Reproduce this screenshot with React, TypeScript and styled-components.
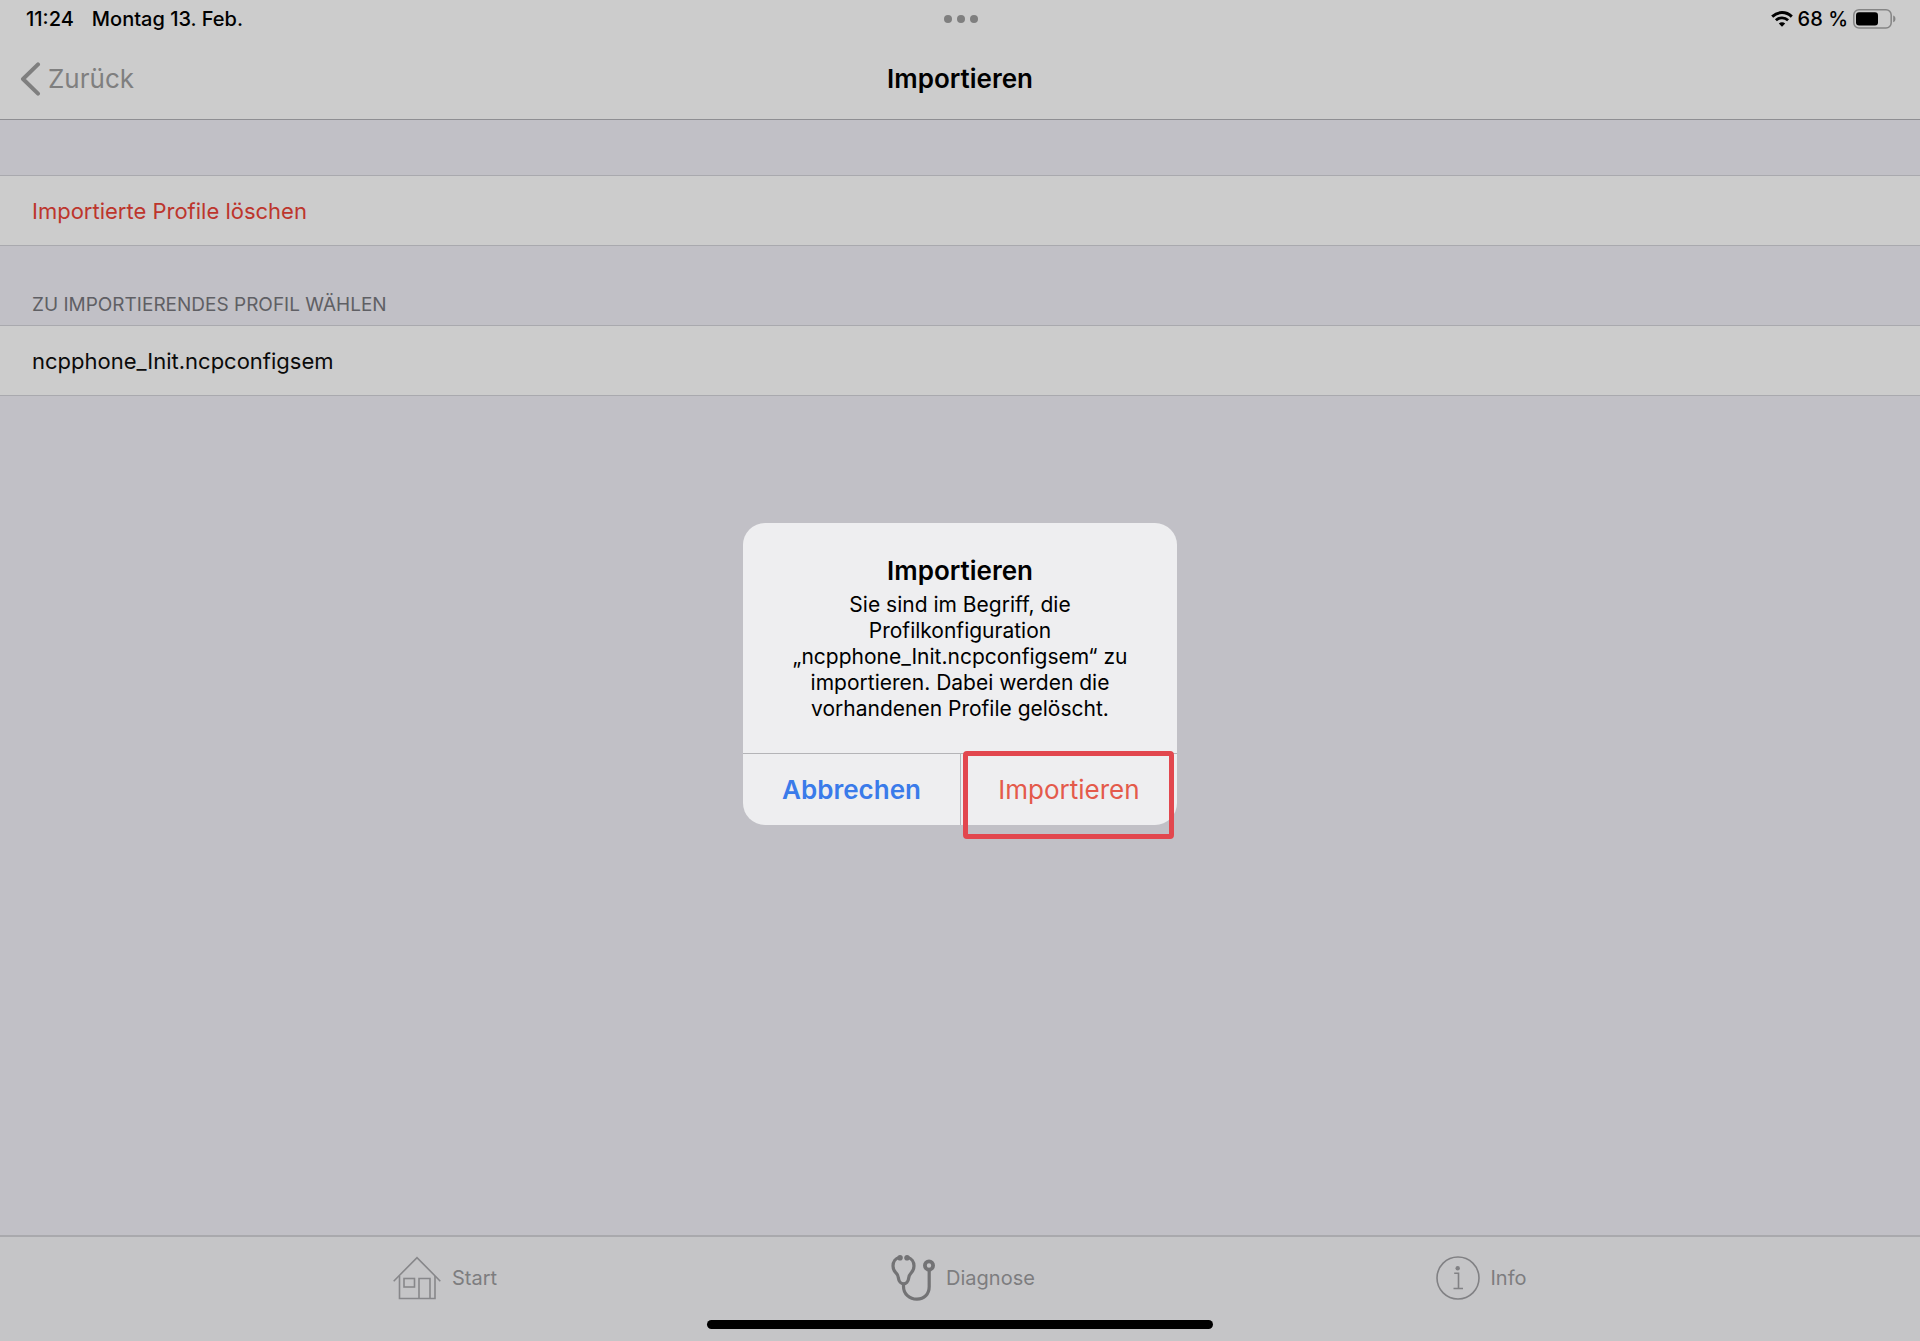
import React from "react";
import styled, { createGlobalStyle } from "styled-components";

const GlobalStyle = createGlobalStyle`
  *, *::before, *::after { box-sizing: border-box; }
  body {
    margin: 0;
    background: #c1c0c6;
    color: #000;
    font-family: Inter, "Liberation Sans", sans-serif;
    -webkit-font-smoothing: antialiased;
  }
  h1, h2, p { margin: 0; padding: 0; }
  button { border: 0; background: none; padding: 0; font: inherit; cursor: pointer; }
`;

const Screen = styled.div`
  min-height: 100vh;
  display: flex;
  flex-direction: column;
`;

const TopArea = styled.header`
  background: #cccccc;
  border-bottom: 1px solid #8e8e92;
`;

const StatusBar = styled.div`
  height: 38px;
  padding: 0 24px 0 26px;
  display: grid;
  grid-template-columns: 1fr auto 1fr;
  align-items: center;
  font-size: 20px;
  line-height: 24px;
  font-weight: 500;
`;

const StatusGroup = styled.div<{ $end?: boolean; $gap: number }>`
  display: flex;
  align-items: center;
  justify-content: ${(p) => (p.$end ? "flex-end" : "flex-start")};
  gap: ${(p) => p.$gap}px;
`;

const Multitasking = styled.button`
  display: flex;
  gap: 5px;
`;

const Dot = styled.span`
  width: 8px;
  height: 8px;
  border-radius: 50%;
  background: #7f7f7f;
`;

const NavBar = styled.nav`
  height: 81px;
  padding: 1px 20px 0;
  display: grid;
  grid-template-columns: 1fr auto 1fr;
  align-items: center;
`;

const BackButton = styled.button`
  justify-self: start;
  display: flex;
  align-items: center;
  gap: 7px;
  color: #7f7f7f;
  font-size: 26px;
  line-height: 32px;
`;

const Title = styled.h1`
  font-size: 26px;
  line-height: 32px;
  font-weight: 600;
`;

const Content = styled.main`
  flex: 1;
  padding-top: 55px;
`;

const Section = styled.section`
  & + & { padding-top: 47px; }
`;

const SectionTitle = styled.h2`
  padding: 0 32px 8px;
  font-size: 19px;
  line-height: 24px;
  font-weight: 400;
  color: #5f5f64;
  text-transform: uppercase;
`;

const Cell = styled.button<{ $destructive?: boolean }>`
  display: block;
  width: 100%;
  height: 71px;
  padding: 0 32px;
  text-align: left;
  font-size: 22px;
  line-height: 28px;
  background: #cccccc;
  border-top: 1px solid #a9a9ae;
  border-bottom: 1px solid #a9a9ae;
  color: ${(p) => (p.$destructive ? "#bd352c" : "#0a0a0a")};
`;

const TabBar = styled.nav`
  height: 106px;
  padding: 0 180px 0 186px;
  display: grid;
  grid-template-columns: repeat(3, 1fr);
  align-items: start;
  position: relative;
  background: #c5c5c7;
  border-top: 2px solid #a9a9ad;
`;

const Tab = styled.button`
  display: flex;
  align-items: center;
  justify-content: center;
  gap: 11px;
  height: 82px;
  font-size: 20px;
  line-height: 24px;
  color: #7d7d7f;
`;

const HomeIndicator = styled.div`
  position: absolute;
  left: 50%;
  bottom: 12px;
  width: 506px;
  height: 9px;
  border-radius: 5px;
  background: #000;
  transform: translateX(-50%);
`;

const Overlay = styled.div`
  position: fixed;
  inset: 0;
  padding-top: 7px;
  display: flex;
  align-items: center;
  justify-content: center;
`;

const Alert = styled.div`
  width: 434px;
  border-radius: 22px;
  background: #eeeef0;
`;

const AlertBody = styled.div`
  padding: 32px 48px 31px;
  text-align: center;
`;

const AlertTitle = styled.h2`
  font-size: 26px;
  line-height: 32px;
  font-weight: 600;
`;

const AlertText = styled.p`
  padding-top: 5px;
  font-size: 21px;
  line-height: 26px;
`;

const AlertActions = styled.div`
  display: grid;
  grid-template-columns: 1fr 1fr;
  border-top: 1px solid #b4b4b7;
`;

const AlertButton = styled.button<{ $tone: "cancel" | "destructive" }>`
  height: 71px;
  font-size: 26px;
  line-height: 32px;
  font-weight: ${(p) => (p.$tone === "cancel" ? 600 : 400)};
  color: ${(p) => (p.$tone === "cancel" ? "#3a7bea" : "#e45a4b")};
`;

const ActionSlot = styled.div`
  position: relative;
  display: grid;
  & + & { border-left: 1px solid #b4b4b7; }
`;

const Highlight = styled.span`
  position: absolute;
  inset: -3px 3px -14px 2px;
  border: 5px solid #e2474e;
  border-radius: 4px;
  pointer-events: none;
`;

const WifiIcon = () => (
  <svg width="22" height="16" viewBox="0 0 22 16" fill="none" stroke="#000" aria-hidden="true">
    <path d="M1.2 5.6C6.8.2 15.2.2 20.8 5.6" strokeWidth="2.9" />
    <path d="M4.9 9.3c3.5-3.3 8.7-3.3 12.2 0" strokeWidth="2.8" />
    <path d="M11 15.8 7.8 12.5c1.8-1.6 4.6-1.6 6.4 0z" fill="#000" stroke="none" />
  </svg>
);

const BatteryIcon = () => (
  <svg width="43" height="20" viewBox="0 0 43 20" aria-hidden="true">
    <rect x="0.8" y="0.8" width="37.4" height="18.2" rx="5.2" fill="none" stroke="#858585" strokeWidth="1.5" />
    <rect x="3" y="3.2" width="22" height="13.4" rx="3" fill="#000" />
    <path d="M40.2 6.6c3 1 3 5.6 0 6.6z" fill="#858585" />
  </svg>
);

const BackIcon = () => (
  <svg width="21" height="34" viewBox="0 0 21 34" fill="none" stroke="#7f7f7f" strokeWidth="4" strokeLinecap="round" strokeLinejoin="round" aria-hidden="true">
    <path d="M18 2.4 3 17l15 14.6" />
  </svg>
);

const HouseIcon = () => (
  <svg width="48" height="44" viewBox="0 0 48 44" fill="none" stroke="#87878a" strokeWidth="1.6" aria-hidden="true">
    <path d="M.7 25.2 24 1.6l23.3 23.6" />
    <path d="M6.5 20v22.5h35.5V20" />
    <rect x="11" y="22.5" width="10.5" height="8.5" />
    <path d="M26 42.5v-20h11v20" />
  </svg>
);

const StethoscopeIcon = () => (
  <svg width="44" height="48" viewBox="0 0 44 48" fill="none" stroke="#737375" strokeWidth="3.2" strokeLinecap="round" strokeLinejoin="round" aria-hidden="true">
    <path d="M8.3 3.5C4.5 4.3 2 8 2 12c0 3.5 1.3 5.5 3.3 7.3C7.2 21 7.2 22.2 7.5 24.5c.4 3 2.5 5.3 5 5.3s4.700-2.300 5.100-5.300c.3-2.300.4-3.500 2.200-5.200C21.700 17.500 23 15.500 23 12c0-4-2.500-7.700-6.300-8.500" />
    <path d="M12.5 30v2.500C12.500 40 18.500 45.200 25.900 45.200S38.200 40 38.200 32.500V17" />
    <circle cx="9" cy="3.7" r="1.2" />
    <circle cx="16" cy="3.7" r="1.2" />
    <circle cx="38" cy="11.5" r="4.1" strokeWidth="3.8" />
  </svg>
);

const InfoIcon = () => (
  <svg width="44" height="44" viewBox="0 0 44 44" fill="none" stroke="#818184" strokeWidth="1.6" aria-hidden="true">
    <circle cx="22" cy="22" r="21" />
    <path d="M18.2 17.3h4.3v15.2M17.5 32.5h9.5" />
    <circle cx="21.7" cy="12.3" r="2.2" fill="#818184" stroke="none" />
  </svg>
);

const tabs = [
  { label: "Start", Icon: HouseIcon },
  { label: "Diagnose", Icon: StethoscopeIcon },
  { label: "Info", Icon: InfoIcon },
];

export default function App() {
  return (
    <>
      <GlobalStyle />
      <Screen>
        <TopArea>
          <StatusBar>
            <StatusGroup $gap={18}>
              <span>11:24</span>
              <span>Montag 13. Feb.</span>
            </StatusGroup>
            <Multitasking aria-label="Multitasking">
              <Dot />
              <Dot />
              <Dot />
            </Multitasking>
            <StatusGroup $gap={5} $end>
              <WifiIcon />
              <span>68 %</span>
              <BatteryIcon />
            </StatusGroup>
          </StatusBar>
          <NavBar>
            <BackButton>
              <BackIcon />
              Zurück
            </BackButton>
            <Title>Importieren</Title>
          </NavBar>
        </TopArea>
        <Content>
          <Section>
            <Cell $destructive>Importierte Profile löschen</Cell>
          </Section>
          <Section>
            <SectionTitle>Zu importierendes Profil wählen</SectionTitle>
            <Cell>ncpphone_Init.ncpconfigsem</Cell>
          </Section>
        </Content>
        <TabBar>
          {tabs.map(({ label, Icon }) => (
            <Tab key={label}>
              <Icon />
              {label}
            </Tab>
          ))}
          <HomeIndicator />
        </TabBar>
      </Screen>
      <Overlay>
        <Alert role="alertdialog" aria-labelledby="alert-title" aria-describedby="alert-text">
          <AlertBody>
            <AlertTitle id="alert-title">Importieren</AlertTitle>
            <AlertText id="alert-text">
              Sie sind im Begriff, die Profilkonfiguration „ncpphone_Init.ncpconfigsem“ zu importieren.
              Dabei werden die vorhandenen Profile gelöscht.
            </AlertText>
          </AlertBody>
          <AlertActions>
            <ActionSlot>
              <AlertButton $tone="cancel">Abbrechen</AlertButton>
            </ActionSlot>
            <ActionSlot>
              <AlertButton $tone="destructive">Importieren</AlertButton>
              <Highlight />
            </ActionSlot>
          </AlertActions>
        </Alert>
      </Overlay>
    </>
  );
}
